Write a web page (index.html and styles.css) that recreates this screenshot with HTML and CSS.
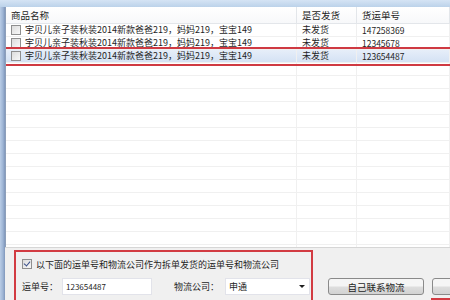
FILE: index.html
```html
<!DOCTYPE html>
<html lang="zh-CN">
<head>
  <meta charset="UTF-8" />
  <title>拆单发货</title>
  <link rel="stylesheet" href="styles.css">
</head>
<body>
  <div class="window">
    <div class="frame-top"></div>
    <div class="frame-body">
      <div class="frame-left"></div>
      <div class="content">
        <div class="list">
          <div class="row head">
            <div class="cell">商品名称</div>
            <div class="cell">是否发货</div>
            <div class="cell">货运单号</div>
          </div>
          <div id="rows"></div>
        </div>

        <div class="panel">
          <div class="split-box">
            <label class="check-line">
              <span class="box checked"></span>
              以下面的运单号和物流公司作为拆单发货的运单号和物流公司
            </label>
            <div class="field-line">
              <span class="label">运单号：</span>
              <span class="input">123654487</span>
              <span class="label company">物流公司：</span>
              <span class="select">申通<span class="arrow"></span></span>
            </div>
          </div>
          <div class="buttons">
            <button class="btn">自己联系物流</button>
            <button class="btn marked"></button>
          </div>
        </div>
      </div>
    </div>
  </div>

  <script>
    const items = [
      { name: "宇贝儿亲子装秋装2014新款爸爸219，妈妈219，宝宝149", state: "未发货", no: "147258369" },
      { name: "宇贝儿亲子装秋装2014新款爸爸219，妈妈219，宝宝149", state: "未发货", no: "12345678" },
      { name: "宇贝儿亲子装秋装2014新款爸爸219，妈妈219，宝宝149", state: "未发货", no: "123654487", selected: true }
    ];
    const rowsDiv = document.getElementById("rows");

    for (let i = 0; i < 18; i++) {
      const item = items[i];
      const row = document.createElement("div");
      row.classList.add("row");
      if (item) {
        if (item.selected) row.classList.add("selected");
        row.innerHTML =
          '<div class="cell"><span class="box"></span>' + item.name + '</div>' +
          '<div class="cell">' + item.state + '</div>' +
          '<div class="cell num">' + item.no + '</div>';
      } else {
        row.innerHTML = '<div class="cell"></div><div class="cell"></div><div class="cell"></div>';
      }
      rowsDiv.appendChild(row);
    }
  </script>
</body>
</html>
```

FILE: styles.css
```css
body {
  margin: 0;
  font-family: "Noto Sans CJK SC", "Noto Sans", sans-serif;
  font-size: 9px;
  color: #1e1e1e;
  background: #fff;
}

.window {
  width: 450px;
  height: 300px;
  display: flex;
  flex-direction: column;
  overflow: hidden;
}

.frame-top {
  height: 7px;
  flex: none;
  background: linear-gradient(#d5e4f4, #bcd2ea);
}

.frame-body {
  flex: 1;
  display: flex;
  min-height: 0;
}

.frame-left {
  width: 5px;
  flex: none;
  background: linear-gradient(90deg, #b9cce6, #9db4d4 60%, #7f96bb);
}

.content {
  flex: 1;
  display: flex;
  flex-direction: column;
  min-width: 0;
}

.list {
  height: 240px;
  flex: none;
  overflow: hidden;
  border-left: 1px solid #8d9fba;
  background: #fff;
}

.row {
  display: grid;
  grid-template-columns: 291px 60px 1fr;
  height: 13px;
  line-height: 12px;
  border-bottom: 1px solid #f0f0f0;
  box-sizing: border-box;
  white-space: nowrap;
}

.row .cell {
  padding-left: 5px;
  border-right: 1px solid #f0f0f0;
  overflow: hidden;
  display: flex;
  align-items: center;
}

.row.head {
  height: 17px;
  line-height: 16px;
  font-size: 9.5px;
  background: linear-gradient(#ffffff, #f7f8fa);
  border-bottom: 1px solid #e3e6ea;
}

.row.head .cell {
  border-right: 1px solid #e3e6ea;
}

.row.selected {
  background: linear-gradient(#e6eef9, #d4e2f4);
  outline: 2px solid #cf3a42;
  outline-offset: 1px;
  position: relative;
}

.num {
  font-size: 8.5px;
}

.box {
  width: 8px;
  height: 8px;
  margin-right: 4px;
  flex: none;
  border: 1px solid #8f8f8f;
  background: linear-gradient(135deg, #dcdcdc, #f8f8f8);
  position: relative;
}

.box.checked::after {
  content: "";
  position: absolute;
  left: 2px;
  top: 0;
  width: 3px;
  height: 5px;
  border-right: 1.5px solid #3a4f8a;
  border-bottom: 1.5px solid #3a4f8a;
  transform: rotate(40deg);
}

.panel {
  flex: 1;
  display: flex;
  align-items: flex-start;
  gap: 15px;
  padding: 2px 0 0 9px;
  background: #f0f0f0;
  border-top: 1px solid #d6d6d6;
  white-space: nowrap;
}

.split-box {
  width: 299px;
  height: 60px;
  flex: none;
  border: 2px solid #d23b42;
  padding: 6px 0 0 6px;
  box-sizing: border-box;
}

.check-line {
  display: flex;
  align-items: center;
  height: 12px;
}

.field-line {
  display: flex;
  align-items: center;
  margin-top: 8px;
}

.label {
  margin-right: 4px;
}

.label.company {
  margin: 0 6px 0 22px;
}

.input {
  width: 85px;
  height: 15px;
  line-height: 15px;
  padding-left: 3px;
  background: #fff;
  border: 1px solid #e2e3ea;
  font-size: 8px;
}

.select {
  width: 80px;
  height: 15px;
  line-height: 15px;
  padding-left: 3px;
  background: #fff;
  border: 1px solid #e2e3ea;
  display: flex;
  justify-content: space-between;
  align-items: center;
}

.arrow {
  width: 0;
  height: 0;
  margin-right: 4px;
  border-left: 3px solid transparent;
  border-right: 3px solid transparent;
  border-top: 3px solid #1e1e1e;
}

.buttons {
  display: flex;
  gap: 8px;
  margin-top: 28px;
}

.btn {
  width: 96px;
  height: 17px;
  flex: none;
  padding: 0;
  font-family: inherit;
  font-size: 9.5px;
  color: #1e1e1e;
  border: 1px solid #8a8a8a;
  border-radius: 3px;
  background: linear-gradient(#f5f5f5 45%, #dddddd 55%, #d2d2d2);
}

.btn.marked {
  position: relative;
}

.btn.marked::after {
  content: "";
  position: absolute;
  left: -2px;
  right: -2px;
  top: 19px;
  border-top: 2px solid #d23b42;
}
```
